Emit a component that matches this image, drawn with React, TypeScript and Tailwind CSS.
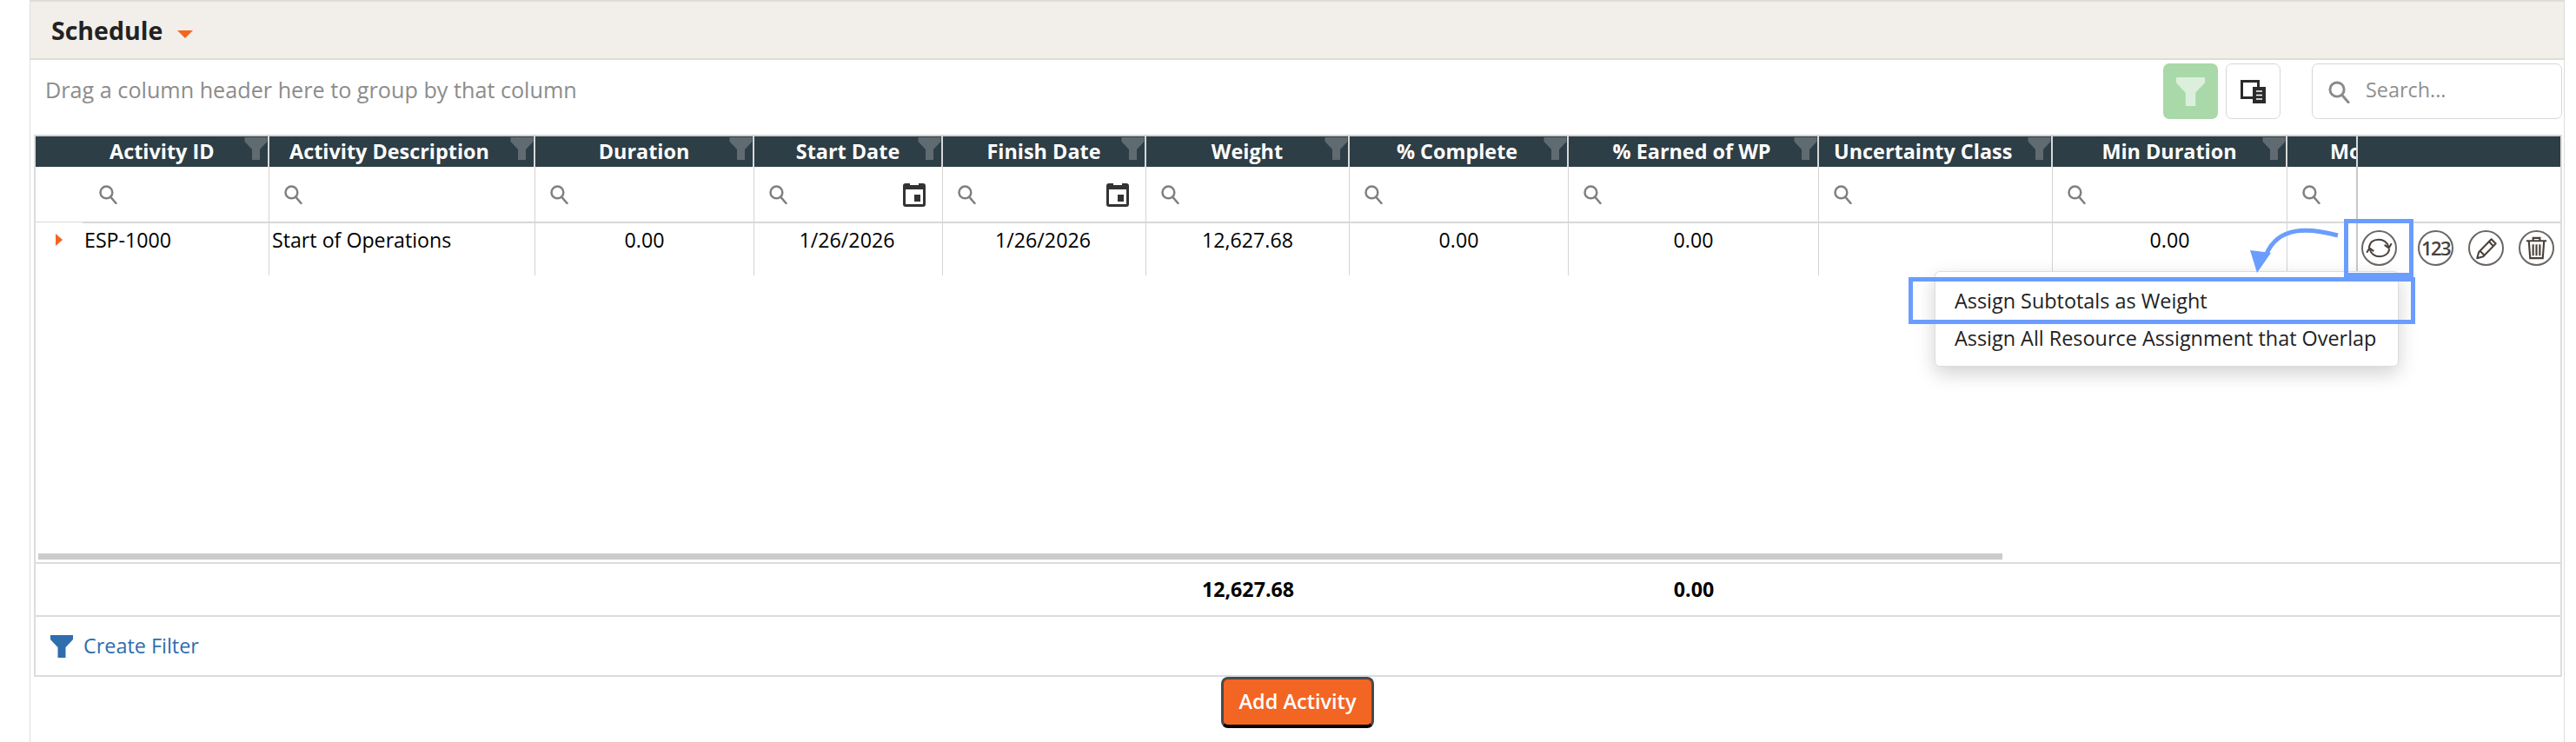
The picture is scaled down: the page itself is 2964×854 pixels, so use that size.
const COLS = [
  { id: "id", width: "w-[269px]", head: "Activity ID", headClass: "justify-start pl-[85px]", value: "ESP-1000", cellClass: "justify-start pl-[56px]", searchClass: "ml-[72px]" },
  { id: "desc", width: "w-[306px]", head: "Activity Description", headClass: "justify-start pl-[23px]", value: "Start of Operations", cellClass: "justify-start pl-[3px]", searchClass: "ml-[16px]" },
  { id: "dur", width: "w-[252px]", head: "Duration", headClass: "justify-center", value: "0.00", cellClass: "justify-center", searchClass: "ml-[16px]" },
  { id: "start", width: "w-[217px]", head: "Start Date", headClass: "justify-center", value: "1/26/2026", cellClass: "justify-center pr-[3px]", searchClass: "ml-[16px]", date: true },
  { id: "finish", width: "w-[234px]", head: "Finish Date", headClass: "justify-center", value: "1/26/2026", cellClass: "justify-center pr-[3px]", searchClass: "ml-[16px]", date: true },
  { id: "weight", width: "w-[234px]", head: "Weight", headClass: "justify-center", value: "12,627.68", cellClass: "justify-center", searchClass: "ml-[16px]", total: "12,627.68" },
  { id: "pct", width: "w-[252px]", head: "% Complete", headClass: "justify-center pr-[3px]", value: "0.00", cellClass: "justify-center", searchClass: "ml-[16px]" },
  { id: "earned", width: "w-[288px]", head: "% Earned of WP", headClass: "justify-center pr-[3px]", value: "0.00", cellClass: "justify-center", searchClass: "ml-[16px]", total: "0.00" },
  { id: "class", width: "w-[269px]", head: "Uncertainty Class", headClass: "justify-start pl-[17px]", value: "", cellClass: "justify-center", searchClass: "ml-[16px]" },
  { id: "min", width: "w-[270px]", head: "Min Duration", headClass: "justify-center", value: "0.00", cellClass: "justify-center", searchClass: "ml-[16px]" },
  { id: "mode", width: "w-[81px]", head: "Mode", headClass: "justify-start pl-[49px]", value: "", cellClass: "justify-center", searchClass: "ml-[16px]", noFilter: true },
];

function SearchIcon({ className }: { className?: string }) {
  return (
    <svg viewBox="0 0 22 22" className={className} fill="none" stroke="currentColor" strokeWidth="2.4">
      <circle cx="9" cy="9" r="6.6" />
      <path d="M13.6 14l6 7" strokeLinecap="round" />
    </svg>
  );
}

function Funnel({ className }: { className?: string }) {
  return (
    <svg viewBox="0 0 26 26" className={className} fill="currentColor">
      <path d="M0 0h26v5L17.500 14v12h-9V14L0 5z" />
    </svg>
  );
}

function CalendarIcon() {
  return (
    <svg viewBox="0 0 26 28" className="w-[26px] h-[28px] text-[#333]" fill="currentColor">
      <path d="M3 1h5v2h10V1h5a3 3 0 0 1 3 3v21a3 3 0 0 1-3 3H3a3 3 0 0 1-3-3V4a3 3 0 0 1 3-3z" />
      <rect x="3" y="8" width="20" height="17" fill="#fff" />
      <rect x="13" y="14" width="7" height="8" />
    </svg>
  );
}

function CircleAction({ className, children }: { className?: string; children: React.ReactNode }) {
  return (
    <div className={`w-[41px] h-[41px] rounded-full border-2 border-[#6a6663] flex items-center justify-center text-[#4a403a] shrink-0 ${className ?? ""}`}>
      {children}
    </div>
  );
}

export default function App() {
  return (
    <div className="relative w-[2964px] h-[854px] overflow-hidden bg-white font-['Open_Sans',sans-serif] text-[23px] text-black">
      <div className="ml-[34px] w-[2917px] h-[854px] border-x border-[#dddddd]">
        <div className="h-[69px] bg-[#f2efea] border-t-2 border-b-2 border-[#e0ddd8] flex items-center pl-[24px]">
          <span className="text-[28.500px] font-bold text-[#222] mt-[1px]">Schedule</span>
          <span className="ml-[17px] mt-[9px] w-0 h-0 border-x-[9px] border-x-transparent border-t-[9px] border-t-[#f36523]" />
        </div>

        <div className="h-[86px] flex items-start pl-[17px]">
          <span className="mt-[17px] text-[25.200px] leading-[34px] text-[#8c8c8c]">Drag a column header here to group by that column</span>
          <div className="ml-auto mt-[4px] flex items-start pr-[2px]">
            <div className="w-[63px] h-[64px] rounded-[7px] bg-[#a9d9a8] flex items-center justify-center">
              <Funnel className="w-[33px] h-[33px] text-[#dcefdc]" />
            </div>
            <div className="ml-[9px] w-[63px] h-[64px] rounded-[7px] border border-[#d8d8d8] flex items-center justify-center">
              <svg viewBox="0 0 29 27" className="w-[29px] h-[27px]">
                <rect x="1.500" y="1.500" width="19" height="19" fill="none" stroke="#2b2b2b" strokeWidth="3" />
                <rect x="14" y="8" width="15" height="19" fill="#2b2b2b" />
                <path d="M18 13h7M18 17.500h7M18 22h7" stroke="#fff" strokeWidth="1.600" />
              </svg>
            </div>
            <div className="ml-[36px] w-[288px] h-[64px] rounded-[7px] border border-[#d8d8d8] flex items-center pl-[17px]">
              <SearchIcon className="w-[27px] h-[27px] text-[#8a8a8a]" />
              <span className="ml-[17px] -mt-[3px] text-[#8f8f8f] text-[23.400px]">Search...</span>
            </div>
          </div>
        </div>

        <div className="ml-[4px] w-[2909px] h-[624px] border-x-2 border-b-2 border-[#dcdcdc] flex flex-col">
          <div className="h-[37px] flex bg-[#2d3e46] border-t-2 border-[#d4d4d4] shrink-0">
            {COLS.map((col) => (
              <div key={col.id} className={`${col.width} relative flex items-center overflow-hidden border-r-2 border-[#d8d8d8] text-white font-bold text-[23.400px] whitespace-nowrap ${col.headClass}`}>
                {col.head}
                {!col.noFilter && <Funnel className="absolute right-0 top-[1px] w-[27px] h-[26px] text-[#5f6b70]" />}
              </div>
            ))}
            <div className="flex-1" />
          </div>

          <div className="h-[64px] flex border-b border-[#d8d8d8] shrink-0">
            {COLS.map((col) => (
              <div key={col.id} className={`${col.width} flex items-center border-r border-[#d4d4d4] ${col.id === "mode" ? "border-r-2 border-r-[#c8c8c8]" : ""}`}>
                <SearchIcon className={`w-[23px] h-[23px] text-[#808080] ${col.searchClass}`} />
                {col.date && <span className="ml-auto mr-[19px] flex"><CalendarIcon /></span>}
              </div>
            ))}
          </div>

          <div className="h-[62px] flex border-t-2 border-[#d8d8d8] ml-[54px] shrink-0 -mt-px -mb-[1px]">
            <div className="flex -ml-[54px]">
              {COLS.map((col) => (
                <div key={col.id} className={`${col.width} relative flex items-start pt-[2px] border-r border-[#d4d4d4] text-[23.200px] whitespace-nowrap ${col.cellClass} ${col.id === "mode" ? "border-r-2 border-r-[#c8c8c8]" : ""}`}>
                  {col.id === "id" && (
                    <span className="absolute left-[23px] top-[12px] w-0 h-0 border-y-[7.500px] border-y-transparent border-l-[8px] border-l-[#f36523]" />
                  )}
                  {col.value}
                </div>
              ))}
            </div>
            <div className="flex items-start pt-[8px]">
              <CircleAction className="ml-[4px]">
                <svg viewBox="0 0 32 32" className="w-[33px] h-[33px]" fill="none" stroke="currentColor" strokeWidth="2">
                  <path d="M4.500 15.500C5.500 9.500 10 6.500 15.500 6.500c5 0 9.500 3 11 8" />
                  <path d="M22 12.500l4.800 3.500 3-5" />
                  <path d="M27.500 17c-1 5.500-5.500 8.500-11 8.500-5 0-9.500-3-11-8" />
                  <path d="M10 19.500l-4.800-3.500-3 5" />
                </svg>
              </CircleAction>
              <CircleAction className="ml-[24px] font-semibold text-[22px] tracking-[-1.500px]">123</CircleAction>
              <CircleAction className="ml-[17px]">
                <svg viewBox="0 0 30 30" className="w-[28px] h-[28px]" fill="none" stroke="currentColor" strokeWidth="2.200" strokeLinejoin="round">
                  <path d="M21 3.500l5.500 5.500L11 25l-7.500 2 2-7.500z" />
                  <path d="M7 18l5.500 5.500M18 6.500l5.500 5.500" />
                </svg>
              </CircleAction>
              <CircleAction className="ml-[17px]">
                <svg viewBox="0 0 30 30" className="w-[29px] h-[29px]" fill="none" stroke="currentColor" strokeWidth="2.200">
                  <path d="M3 6.500h24M11 6V3h8v3" />
                  <path d="M6 7l1.500 20h15L24 7" />
                  <path d="M11 10.500v13.500M15 10.500v13.500M19 10.500v13.500" />
                </svg>
              </CircleAction>
            </div>
          </div>

          <div className="flex-1 min-h-0" />
          <div className="ml-[3px] w-[2260px] h-[7px] bg-[#cbcbcb] shrink-0" />
          <div className="h-[3px] shrink-0" />

          <div className="h-[63px] flex border-t-2 border-b-2 border-[#dcdcdc] shrink-0">
            {COLS.map((col) => (
              <div key={col.id} className={`${col.width} flex items-center justify-center font-bold text-[23.200px]`}>
                {col.total}
              </div>
            ))}
          </div>

          <div className="h-[67px] flex items-center pl-[17px] shrink-0">
            <Funnel className="w-[26px] h-[26px] text-[#2e6dae]" />
            <span className="ml-[12px] text-[23.400px] text-[#2e6dae]">Create Filter</span>
          </div>
        </div>

        <div className="flex justify-center pl-[1px]">
          <button className="w-[176px] h-[59px] rounded-[8px] border-[3px] border-[#4a4a4a] border-b-[4px] border-b-black bg-[#f36523] text-white font-semibold text-[23.500px]">
            Add Activity
          </button>
        </div>
      </div>

      {/* menu + tutorial callouts lying over the grid */}
      <div className="absolute left-[2226px] top-[312px] w-[534px] h-[110px] rounded-[6px] border border-[#dddddd] bg-white shadow-[0_8px_22px_rgba(0,0,0,0.18)] pl-[22px] pt-[12px] text-[23.400px] leading-[43px] text-[#222] whitespace-nowrap">
        <div>Assign Subtotals as Weight</div>
        <div>Assign All Resource Assignment that Overlap</div>
      </div>
      <div className="absolute left-[2196px] top-[319px] w-[583px] h-[54px] border-[5px] border-[#6a9dfd]" />
      <div className="absolute left-[2697px] top-[252px] w-[80px] h-[67px] border-[5px] border-[#6a9dfd]" />
      <svg viewBox="0 0 110 60" className="absolute left-[2586px] top-[258px] w-[110px] h-[60px]" fill="#6a9dfd">
        <path d="M104 13C70 4 36 2 22 34" fill="none" stroke="#6a9dfd" strokeWidth="5" />
        <path d="M3 30l24 3-16 23z" />
      </svg>
    </div>
  );
}
